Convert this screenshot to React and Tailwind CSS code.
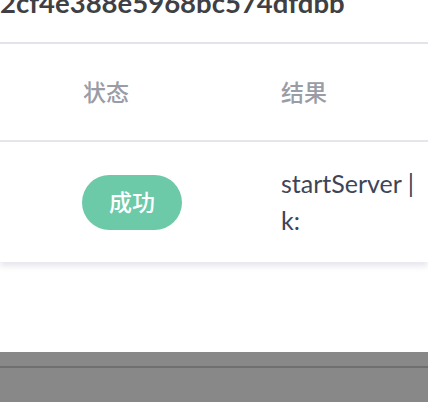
export default function App() {
  return (
    <div className="w-[428px] h-[402px] overflow-hidden bg-white flex flex-col" style={{ fontFamily: 'Lato, "Noto Sans CJK SC", sans-serif' }}>
      <div className="h-[44px] shrink-0 border-b-2 border-[#e3e4ea] overflow-hidden">
        <p className="mt-[-11px] text-[27.5px] leading-[27px] font-bold text-[#3f3f44] whitespace-nowrap">2cf4e388e5968bc574dfdbb</p>
      </div>
      <div className="h-[98px] shrink-0 flex items-center border-b-2 border-[#e6e7ec] text-[23px] font-medium text-[#9a9ca6]">
        <div className="w-[281px] pl-[83px] shrink-0">状态</div>
        <div className="flex-1">结果</div>
      </div>
      <div className="h-[120px] shrink-0 flex items-center shadow-[0_4px_6px_rgba(180,184,200,0.35)] relative">
        <div className="w-[281px] pl-[82px] shrink-0">
          <span className="inline-flex items-center justify-center w-[100px] h-[55px] rounded-full bg-[#6dcaa8] text-white text-[23px] font-medium">成功</span>
        </div>
        <div className="flex-1 text-[25px] leading-[37px] text-[#3e4557] whitespace-pre">{'startServer |\nk:'}</div>
      </div>
      <div className="flex-1" />
      <div className="h-[50px] shrink-0 bg-[#888888] flex flex-col">
        <div className="h-[14px]" />
        <div className="h-[2px] bg-[#6f6f6f]" />
      </div>
    </div>
  )
}
